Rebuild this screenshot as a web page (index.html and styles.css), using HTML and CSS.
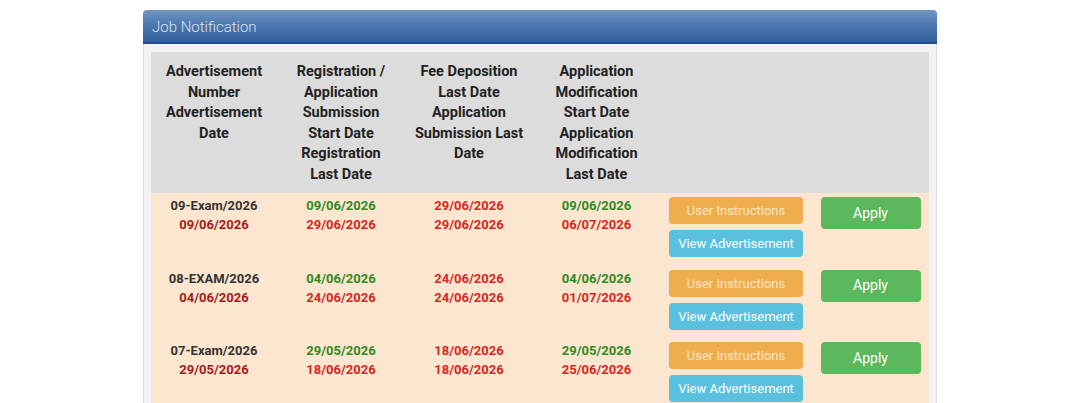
FILE: index.html
```html
<!DOCTYPE html>
<html lang="en">
<head>
<meta charset="utf-8">
<title>Job Notification</title>
<link rel="stylesheet" href="styles.css">
</head>
<body>
<div class="panel">
  <div class="panel-head">Job Notification</div>
  <div class="panel-body">
    <table class="jobs">
      <colgroup>
        <col class="c1"><col class="c2"><col class="c3"><col class="c4"><col class="c5"><col class="c6">
      </colgroup>
      <thead>
        <tr>
          <th>Advertisement<br>Number<br>Advertisement<br>Date</th>
          <th>Registration /<br>Application<br>Submission<br>Start Date<br>Registration<br>Last Date</th>
          <th>Fee Deposition<br>Last Date<br>Application<br>Submission Last<br>Date</th>
          <th>Application<br>Modification<br>Start Date<br>Application<br>Modification<br>Last Date</th>
          <th></th>
          <th></th>
        </tr>
      </thead>
      <tbody>
        <tr>
          <td><span class="num">09-Exam/2026</span><br><span class="adate">09/06/2026</span></td>
          <td><span class="green">09/06/2026</span><br><span class="red">29/06/2026</span></td>
          <td><span class="red">29/06/2026</span><br><span class="red">29/06/2026</span></td>
          <td><span class="green">09/06/2026</span><br><span class="red">06/07/2026</span></td>
          <td><div class="btns"><a class="btn warn">User Instructions</a><a class="btn info">View Advertisement</a></div></td>
          <td><a class="btn apply">Apply</a></td>
        </tr>
        <tr>
          <td><span class="num">08-EXAM/2026</span><br><span class="adate">04/06/2026</span></td>
          <td><span class="green">04/06/2026</span><br><span class="red">24/06/2026</span></td>
          <td><span class="red">24/06/2026</span><br><span class="red">24/06/2026</span></td>
          <td><span class="green">04/06/2026</span><br><span class="red">01/07/2026</span></td>
          <td><div class="btns"><a class="btn warn">User Instructions</a><a class="btn info">View Advertisement</a></div></td>
          <td><a class="btn apply">Apply</a></td>
        </tr>
        <tr>
          <td><span class="num">07-Exam/2026</span><br><span class="adate">29/05/2026</span></td>
          <td><span class="green">29/05/2026</span><br><span class="red">18/06/2026</span></td>
          <td><span class="red">18/06/2026</span><br><span class="red">18/06/2026</span></td>
          <td><span class="green">29/05/2026</span><br><span class="red">25/06/2026</span></td>
          <td><div class="btns"><a class="btn warn">User Instructions</a><a class="btn info">View Advertisement</a></div></td>
          <td><a class="btn apply">Apply</a></td>
        </tr>
      </tbody>
    </table>
  </div>
</div>
</body>
</html>
```
FILE: styles.css
```css
html, body {
  margin: 0;
  padding: 0;
  background: #ffffff;
  font-family: Roboto, "Liberation Sans", Arial, sans-serif;
}
.panel {
  width: 794px;
  margin: 10px 0 0 143px;
}
.panel-head {
  height: 32px;
  line-height: 34px;
  padding-left: 9px;
  border-radius: 4px 4px 0 0;
  background: linear-gradient(to bottom, #7196c4 0%, #4e78ae 45%, #2f5e9d 100%);
  border-bottom: 2px solid #1f4d8b;
  color: #d8e2ee;
  font-size: 15px;
  font-weight: 300;
}
.panel-body {
  background: #f3f3f3;
  border-left: 1px solid #dedede;
  border-right: 1px solid #dedede;
  padding: 8px 7px 0 7px;
}
.jobs {
  width: 778px;
  border-collapse: collapse;
  table-layout: fixed;
}
.c1 { width: 126px; }
.c2 { width: 128px; }
.c3 { width: 128px; }
.c4 { width: 127px; }
.c5 { width: 152px; }
.c6 { width: 117px; }
.jobs th {
  background: #dcdcdc;
  color: #222222;
  font-size: 14.5px;
  font-weight: 700;
  line-height: 20.5px;
  padding: 10px 2px 8px;
  text-align: center;
  vertical-align: top;
}
.jobs td {
  background: #fde6cf;
  font-size: 13px;
  font-weight: 700;
  line-height: 19px;
  padding: 3px 2px 0;
  height: 69.5px;
  text-align: center;
  vertical-align: top;
}
.num { color: #333333; }
.adate { color: #a51b1b; }
.green { color: #2f8a1f; }
.red { color: #d9261f; }
.btns {
  display: flex;
  flex-direction: column;
  align-items: center;
  gap: 6px;
  padding-top: 1px;
}
.btn {
  display: flex;
  align-items: center;
  justify-content: center;
  border-radius: 4px;
  font-size: 13px;
  font-weight: 400;
  color: #ffffff;
  box-sizing: border-box;
}
.warn {
  width: 134px;
  height: 27px;
  background: #f0ad4e;
  color: #fbe6c6;
}
.info {
  width: 134px;
  height: 27px;
  background: #5bc0de;
}
.apply {
  width: 100px;
  height: 32px;
  margin: 1px auto 0;
  background: #5cb85c;
  font-size: 14px;
}
```
